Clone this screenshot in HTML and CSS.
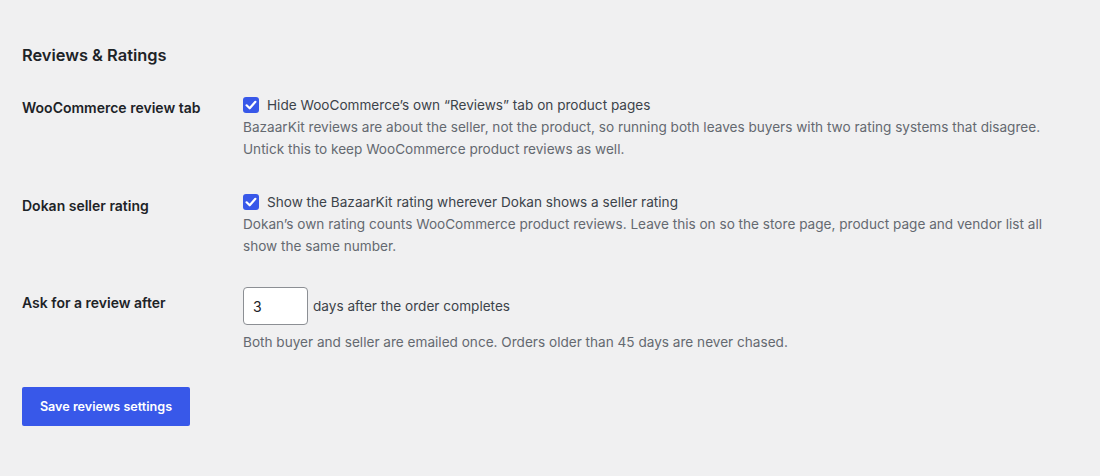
FILE: index.html
```html
<!DOCTYPE html>
<html lang="en">
<head>
<meta charset="utf-8">
<title>Reviews &amp; Ratings</title>
<link rel="stylesheet" href="styles.css">
</head>
<body>
<div class="wrap">
  <h2 class="section-title">Reviews &amp; Ratings</h2>
  <div class="form">
    <div class="row row-1">
      <div class="label">WooCommerce review tab</div>
      <div class="field">
        <label class="check">
          <span class="box"><svg viewBox="0 0 16 16" width="16" height="16"><path d="M3.6 8.3 L6.7 11.3 L12.4 4.8" fill="none" stroke="#fff" stroke-width="2.2" stroke-linecap="round" stroke-linejoin="round"/></svg></span>
          <span class="check-text">Hide WooCommerce’s own “Reviews” tab on product pages</span>
        </label>
        <p class="desc">BazaarKit reviews are about the seller, not the product, so running both leaves buyers with two rating systems that disagree. Untick this to keep WooCommerce product reviews as well.</p>
      </div>
    </div>
    <div class="row row-2">
      <div class="label label-2">Dokan seller rating</div>
      <div class="field">
        <label class="check">
          <span class="box"><svg viewBox="0 0 16 16" width="16" height="16"><path d="M3.6 8.3 L6.7 11.3 L12.4 4.8" fill="none" stroke="#fff" stroke-width="2.2" stroke-linecap="round" stroke-linejoin="round"/></svg></span>
          <span class="check-text">Show the BazaarKit rating wherever Dokan shows a seller rating</span>
        </label>
        <p class="desc">Dokan’s own rating counts WooCommerce product reviews. Leave this on so the store page, product page and vendor list all show the same number.</p>
      </div>
    </div>
    <div class="row row-3">
      <div class="label label-3">Ask for a review after</div>
      <div class="field">
        <div class="inline">
          <span class="num">3</span>
          <span class="check-text">days after the order completes</span>
        </div>
        <p class="desc desc-3">Both buyer and seller are emailed once. Orders older than 45 days are never chased.</p>
      </div>
    </div>
  </div>
  <button class="save" type="button">Save reviews settings</button>
</div>
</body>
</html>
```

FILE: styles.css
```css
html, body {
  margin: 0;
  padding: 0;
  background: #f0f0f1;
}
body {
  font-family: Inter, "Noto Sans", "Liberation Sans", sans-serif;
  color: #1d2327;
  font-size: 13.6px;
}
.wrap {
  padding: 44px 22px 40px 22px;
}
.section-title {
  margin: 0;
  font-size: 16.4px;
  line-height: 22px;
  font-weight: 600;
  color: #1d2327;
}
.form {
  display: flex;
  flex-direction: column;
  margin-top: 28px;
}
.row {
  display: grid;
  grid-template-columns: 221px 1fr;
}
.row-2 {
  margin-top: 31px;
}
.row-3 {
  margin-top: 30px;
}
.label {
  font-weight: 600;
  font-size: 14px;
  line-height: 22px;
  padding-top: 3px;
  color: #1d2327;
}
.label-2 {
  padding-top: 4px;
}
.label-3 {
  padding-top: 5px;
}
.field {
  display: flex;
  flex-direction: column;
}
.check {
  display: flex;
  align-items: center;
  gap: 8px;
  height: 22px;
}
.box {
  width: 16px;
  height: 16px;
  border-radius: 3px;
  background: #3858e9;
  display: flex;
  flex: none;
}
.check-text {
  font-size: 13.6px;
  line-height: 22px;
  color: #3c434a;
}
.desc {
  margin: 0;
  font-size: 13.6px;
  line-height: 22px;
  color: #646970;
  max-width: 830px;
}
.inline {
  display: flex;
  align-items: center;
  gap: 5px;
}
.num {
  box-sizing: border-box;
  width: 65px;
  height: 38px;
  border: 1px solid #8c8f94;
  border-radius: 4px;
  background: #fff;
  padding: 0 9px;
  display: flex;
  align-items: center;
  font-size: 14px;
  color: #1d2327;
}
.desc-3 {
  margin-top: 6px;
}
.save {
  margin-top: 34px;
  width: 168px;
  height: 39px;
  border: 0;
  border-radius: 2px;
  background: #3858e9;
  color: #fff;
  font-family: Inter, "Noto Sans", "Liberation Sans", sans-serif;
  font-size: 12.6px;
  font-weight: 600;
  padding: 0;
  white-space: nowrap;
  text-align: center;
  cursor: pointer;
}
```
